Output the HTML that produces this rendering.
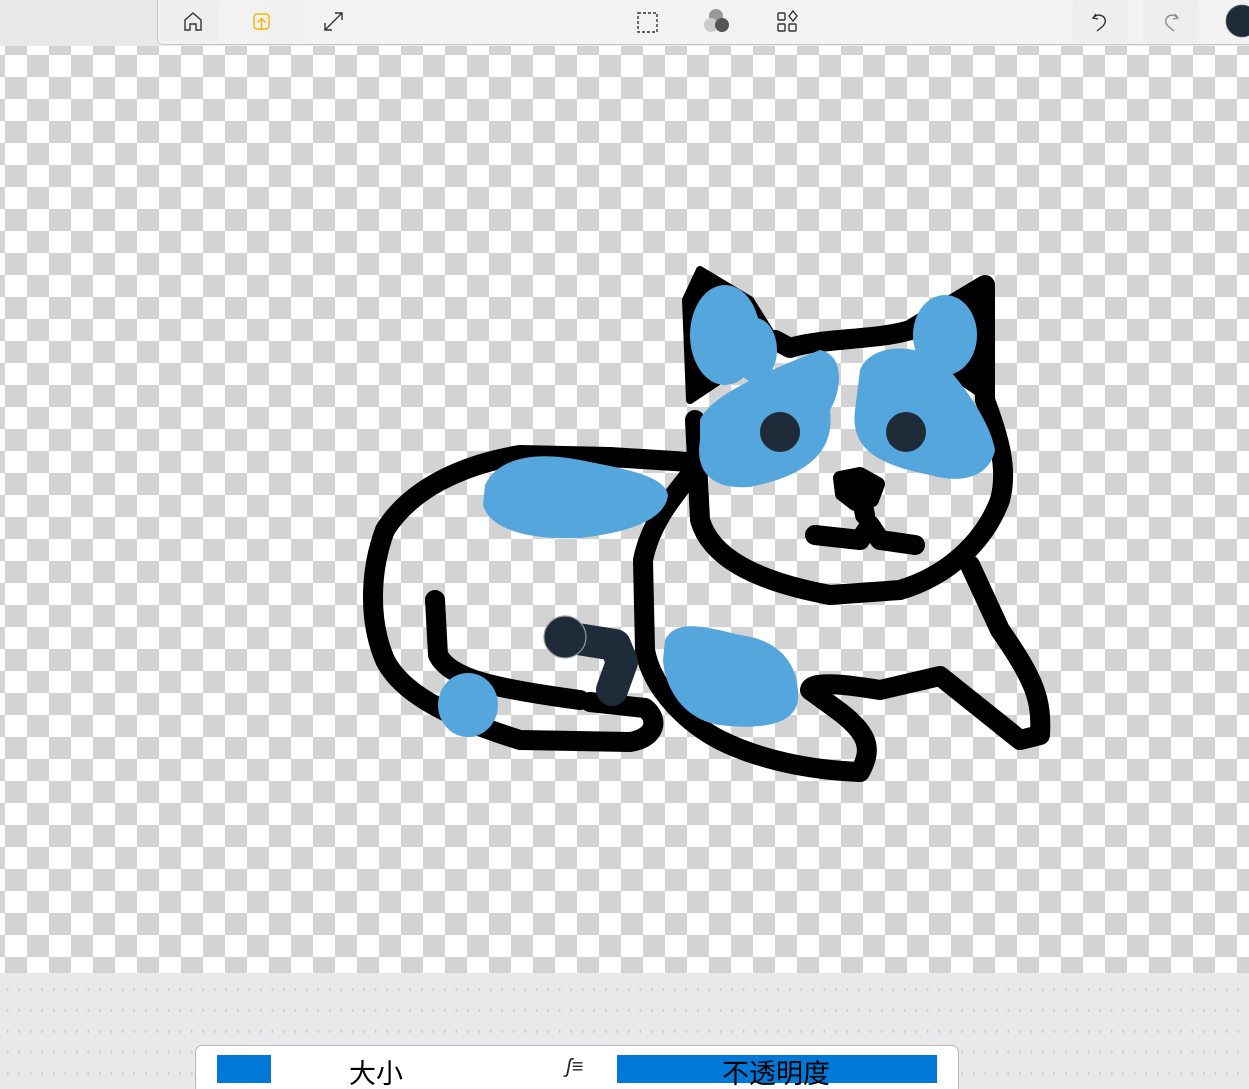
<!DOCTYPE html>
<html><head><meta charset="utf-8"><style>
html,body{margin:0;padding:0;width:1249px;height:1089px;overflow:hidden;background:#e9e9eb;font-family:"Liberation Sans","Noto Sans CJK SC",sans-serif;position:relative}
#canvas{position:absolute;left:0;top:46px;width:1249px;height:927px;background-color:#fff;
background-image:conic-gradient(#d3d3d3 0 25%,#fff 0 50%,#d3d3d3 0 75%,#fff 0);
background-size:44px 44px;background-position:5px 9px}
#top{position:absolute;left:157px;top:0;width:1100px;height:44px;background:#f2f2f2;border-left:1px solid #c8c8c8;border-bottom:1px solid #c8c8c8;border-bottom-left-radius:6px}
#bottombg{position:absolute;left:0;top:973px;width:1249px;height:116px;background-color:#e9e9eb;background-image:radial-gradient(#cfcfd2 0.8px,transparent 1.1px);background-size:11.5px 21px;background-position:2px 6px}
#panel{position:absolute;left:195px;top:1045px;width:762px;height:60px;background:#fff;border:1px solid #b8b8bc;border-radius:7px}
.bar{position:absolute;background:#0078d7}
</style></head><body>
<div id="canvas"></div>
<div id="top"></div>
<svg style="position:absolute;left:0;top:0" width="1249" height="46" fill="none" stroke="#333" stroke-width="1.4">
<rect x="160" y="1" width="58" height="40" fill="#eee" stroke="none"/>
<rect x="265" y="1" width="40" height="40" fill="#f0f0f0" stroke="none"/>
<rect x="1073" y="1" width="55" height="42" fill="#eee" stroke="none"/>
<rect x="1143" y="1" width="55" height="42" fill="#eee" stroke="none"/>
<path d="M185 30V20l8-7 8 7v10h-5v-6h-6v6z"/>
<rect x="254" y="14" width="15" height="15" rx="3" stroke="#f5b400"/>
<path d="M261.5 30V19M257.5 22.5l4-4 4 4" stroke="#f5b400"/>
<path d="M325 30l17-17M335 13h7v7M325 23v7h7"/>
<rect x="638" y="13" width="19" height="19" stroke-dasharray="3 2"/>
<circle cx="716" cy="16" r="7" fill="#999" stroke="none"/>
<circle cx="711" cy="25" r="7" fill="#ccc" stroke="none"/>
<circle cx="722" cy="25" r="7" fill="#555" stroke="none"/>
<rect x="778" y="13" width="7" height="7" rx="1"/><path d="M793 11l4 5-4 5-4-5z"/><rect x="778" y="24" width="7" height="7" rx="1"/><rect x="789" y="24" width="7" height="7" rx="1"/>
<path d="M1096 14l-3 4 5 1M1093 18c6-7 17 0 10 8l-6 5"/>
<path d="M1175 14l3 4-5 1M1178 18c-6-7-17 0-10 8l6 5" stroke="#888"/>
<circle cx="1242" cy="21" r="16" fill="#1e2b38" stroke="#666" stroke-width="0.8"/>
</svg>
<svg style="position:absolute;left:0;top:0" width="1249" height="973" fill="none" stroke-linecap="round" stroke-linejoin="round">
<g fill="#000" stroke="#000" stroke-width="8">
<path d="M690 400L686 300L700 270L750 300L775 340L720 380Z"/>
<path d="M985 280L990 400L960 380L910 330Z"/>
</g>
<g stroke="#000" stroke-width="20">
<path d="M690 462L610 457L520 455C460 465 410 490 385 530C370 570 368 620 385 660C400 690 440 715 520 740L630 742C655 738 660 720 645 708L590 702"/>
<path d="M435 600L438 655C450 678 490 688 580 700"/>
<path d="M695 420L700 520C710 555 750 580 830 595L900 590C950 575 985 540 1000 500C1008 470 1000 440 985 400L985 285L910 330C880 340 820 338 790 348L775 340"/>
<path d="M690 475C670 500 650 525 643 560L645 650C652 690 690 725 720 740C760 760 810 770 860 772C872 750 870 735 840 712L810 690C812 680 850 685 880 690L940 676L1020 740L1040 735C1042 700 1035 680 1000 630L970 565"/>
<path d="M815 535L860 540L870 525L880 540L915 545M865 515L862 500"/>
</g>
<path d="M840 478L860 474L878 484L872 500L855 504L842 494Z" fill="#000" stroke="#000" stroke-width="14"/>
<g fill="#55a6dc">
<ellipse cx="725" cy="335" rx="35" ry="50"/>
<ellipse cx="755" cy="350" rx="22" ry="32"/>
<path d="M700 420C710 395 770 370 820 350C845 355 842 390 830 410C835 450 810 475 750 487C710 490 695 470 700 440Z"/>
<ellipse cx="945" cy="335" rx="32" ry="40"/>
<path d="M860 370C870 345 910 342 940 360C960 380 990 420 995 450C990 475 965 485 930 475C880 465 850 450 855 410Z"/>
<path d="M485 485C500 455 540 452 580 460C620 468 665 475 668 495C665 520 630 532 580 538C530 540 490 530 483 505Z"/>
<path d="M665 640C675 620 700 625 740 635C780 640 800 665 798 700C795 725 760 730 720 725C685 720 665 690 663 660Z"/>
<ellipse cx="468" cy="705" rx="30" ry="32"/>
</g>
<circle cx="780" cy="432" r="20" fill="#1e2b38"/>
<circle cx="906" cy="432" r="20" fill="#1e2b38"/>
<path d="M565 637L615 645L622 662L612 690" stroke="#1e2b38" stroke-width="32"/>
<circle cx="565" cy="637" r="21" fill="#1e2b38" stroke="#999" stroke-width="1.2"/>
</svg>
<div id="bottombg"></div>
<div id="panel"></div>
<div class="bar" style="left:217px;top:1055px;width:54px;height:28px"></div>
<div style="position:absolute;left:349px;top:1052px;font-size:27px;color:#000">大小</div>
<div style="position:absolute;left:566px;top:1056px;font-size:20px;font-style:italic;color:#222">ʃ≡</div>
<div class="bar" style="left:617px;top:1055px;width:320px;height:28px"></div>
<div style="position:absolute;left:722px;top:1052px;font-size:27px;color:#000">不透明度</div>
</body></html>
